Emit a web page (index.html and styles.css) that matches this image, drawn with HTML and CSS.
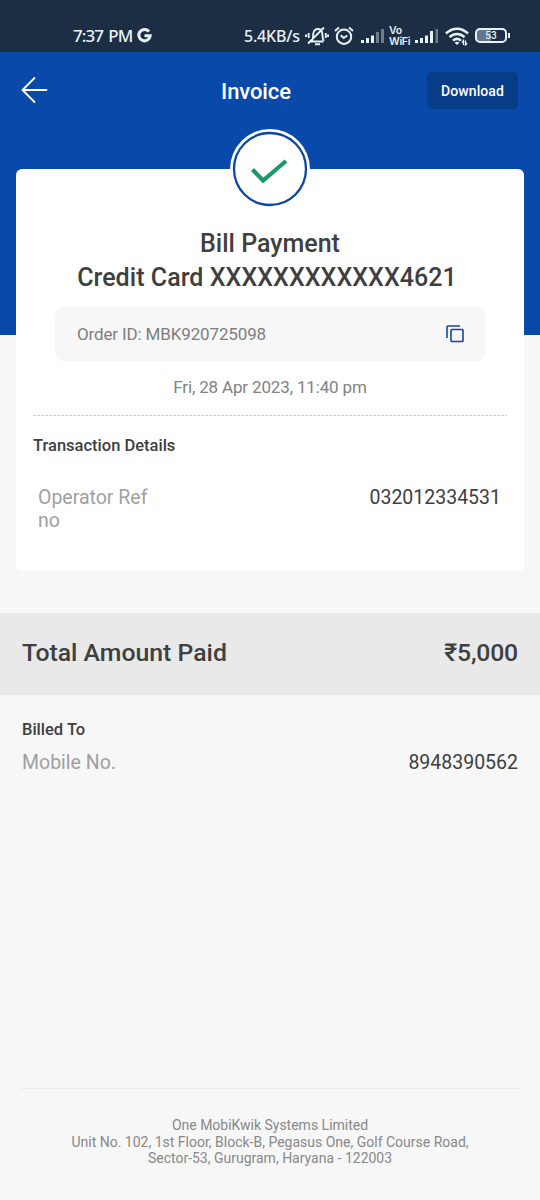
FILE: index.html
```html
<!DOCTYPE html>
<html lang="en">
<head>
<meta charset="utf-8">
<title>Invoice</title>
<link rel="stylesheet" href="styles.css">
</head>
<body>
<div class="status">
  <span class="clock">7:37 PM</span>
  <svg class="google" width="15" height="15" viewBox="0 0 15 15" fill="none" stroke="#e9f1f8" stroke-width="3"><path d="M12 3.600A5.700 5.700 0 1 0 13.200 7.800H7.500"/></svg>
  <span class="speed">5.4KB/s</span>
  <svg class="bell" width="24" height="22" viewBox="0 0 24 22" fill="none" stroke="#e9f1f8" stroke-width="1.9">
    <path d="M5.500 16.500h13M7 16c1.500-2 .8-5 1.300-7.500C9 5 11 4 13 4s4 1.500 4.300 4.500c.3 2.500 0 5 1.500 7.500M10 19.300h5M3 18.500 19 2.500M3.700 8v5M1 9.500v2.500M20.800 8v5M23 9.500v2.500"/>
  </svg>
  <svg class="alarm" width="20" height="20" viewBox="0 0 20 20" fill="none" stroke="#e9f1f8" stroke-width="2">
    <circle cx="10" cy="10.700" r="7.200"/><path d="M1 5 5 1.500M19 5l-4-3.500M6.700 9.200 9.700 12l3.600-2.500"/>
  </svg>
  <svg class="signal-a" width="24" height="16" viewBox="0 0 24 16" fill="#e9f1f8">
    <path d="M0 12h3v3H0zM5 10h3v5H5zM10 7.500h3V15h-3z"/><path opacity=".4" d="M15 4h3v11h-3zM20 1h3v14h-3z"/>
  </svg>
  <span class="vowifi"><span>Vo</span><span>WiFi</span></span>
  <svg class="signal-b" width="24" height="16" viewBox="0 0 24 16" fill="#e9f1f8">
    <path d="M0 12h3v3H0zM5 10h3v5H5zM10 7.500h3V15h-3zM15 3h3v12h-3z"/><path opacity=".4" d="M20.500 1h2.500v14h-2.500z"/>
  </svg>
  <svg class="wifi" width="24" height="19" viewBox="0 0 24 19" fill="none" stroke="#e9f1f8" stroke-width="2.500">
    <path d="M1 6.500C7.500 0 16.500 0 23 6.500M4.500 10.200c4.500-4.200 10.500-4.200 15 0M8 13.600c2.500-2.200 5.500-2.200 8 0"/><path fill="#e9f1f8" stroke="none" d="M9.500 15.500q2.500-1.700 5 0L12 18z"/><path stroke-width="1.300" d="M18.500 18v-4.500l-1.500 2M20.500 13.500v4.500l1.500-2"/>
  </svg>
  <span class="battery"><span class="cell">53</span><span class="cap"></span></span>
</div>
<main class="page">
  <header class="topbar">
    <svg class="back" width="28" height="28" viewBox="0 0 28 28" fill="none" stroke="#fff" stroke-width="1.800" stroke-linecap="round" stroke-linejoin="round"><path d="M14.500 2 2.500 14l12 12M2.500 14h24"/></svg>
    <h1 class="title">Invoice</h1>
    <button class="download">Download</button>
  </header>
  <section class="card">
    <div class="badge">
      <svg width="80" height="80" viewBox="0 0 80 80" fill="none">
        <circle cx="40" cy="40" r="40" fill="#fff"/>
        <circle cx="40" cy="40" r="36" stroke="#0b47a1" stroke-width="2.300"/>
        <path d="M22.500 40.500 33 51.500 56 32" stroke="#1c996c" stroke-width="4.200"/>
      </svg>
    </div>
    <h2 class="heading"><span class="h-one">Bill Payment</span><span class="h-two">Credit Card XXXXXXXXXXXX4621</span></h2>
    <div class="order">
      <span class="order-id">Order ID: MBK920725098</span>
      <svg width="18" height="18" viewBox="0 0 18 18" fill="none" stroke="#0d49a3" stroke-width="1.600"><path d="M1 13V2q0-1 1-1h12"/><rect x="5" y="4.500" width="12" height="12" rx=".8"/></svg>
    </div>
    <p class="date">Fri, 28 Apr 2023, 11:40 pm</p>
    <svg class="rule" width="474" height="2"><path d="M0 .5h474" stroke="#d0d0d0" stroke-width="1" stroke-dasharray="3 1"/></svg>
    <h3 class="sub">Transaction Details</h3>
    <div class="detail">
      <span class="label">Operator Ref<br>no</span>
      <span class="value">032012334531</span>
    </div>
  </section>
  <section class="total"><span class="total-label">Total Amount Paid</span><span class="total-value">₹5,000</span></section>
  <section class="billed">
    <h3 class="sub billed-title">Billed To</h3>
    <div class="billed-row"><span class="label">Mobile No.</span><span class="value">8948390562</span></div>
  </section>
  <footer class="footer">
    <p>One MobiKwik Systems Limited</p>
    <p>Unit No. 102, 1st Floor, Block-B, Pegasus One, Golf Course Road,</p>
    <p>Sector-53, Gurugram, Haryana - 122003</p>
  </footer>
</main>
</body>
</html>
```
FILE: styles.css
```css
* { box-sizing: border-box; margin: 0; padding: 0; }
body { width: 540px; height: 1200px; overflow: hidden; font-family: Roboto, "Noto Sans", sans-serif; color: #3e4040; }
svg { display: block; flex: none; }

.status { height: 52px; padding: 20px 0 0 73px; background: #1b2e43; color: #e9f1f8; display: flex; align-items: center; white-space: nowrap; }
.clock { width: 64px; font: 500 17px/30px "Noto Sans", sans-serif; letter-spacing: -.9px; word-spacing: 1.500px; }
.google { margin: 0 92px 1px 0; }
.speed { width: 61px; font: 500 16px/30px "Noto Sans", sans-serif; letter-spacing: -.2px; }
.alarm { margin-left: 5px; }
.signal-a { margin-left: 7px; }
.vowifi { display: flex; flex-direction: column; width: 26px; margin: -1px 0 0 4px; font: 600 10.500px/11px Inter, sans-serif; letter-spacing: -.3px; }
.wifi { margin-left: 6px; }
.battery { display: flex; align-items: center; gap: 1px; margin: -1px 0 0 6px; }
.cell { width: 32px; height: 15px; border: 2px solid #e9f1f8; border-radius: 5px; background: linear-gradient(90deg, #64788d 50%, #1b2e43 50%); text-align: center; font: 500 10px/11px Roboto, sans-serif; }
.cap { width: 2px; height: 5px; background: #e9f1f8; }

.page { height: 1148px; display: flex; flex-direction: column; background: linear-gradient(#0849a9 283px, #f7f7f7 283px); }
.topbar { height: 117px; padding: 20px 22px 0 20px; display: flex; align-items: flex-start; }
.back { margin-top: 4px; }
.title { margin-left: 173px; color: #fff; font-size: 22px; line-height: 40px; font-weight: 500; letter-spacing: -.1px; }
.download { margin-left: auto; width: 91px; height: 37px; padding-top: 1px; border: 0; border-radius: 5px; background: #073c88; color: #fff; font: 500 14px/36px Roboto, sans-serif; letter-spacing: .1px; }

.card { position: relative; height: 402px; margin: 0 16px; padding: 58px 17px 0; background: #fff; border-radius: 6px; }
.badge { position: absolute; top: -40px; left: 214px; }
.heading { display: flex; flex-direction: column; align-items: center; font-size: 25px; line-height: 33px; font-weight: 500; white-space: nowrap; }
.h-two { margin-right: 6px; line-height: 35px; letter-spacing: .05px; }
.order { margin: 12px 22px 0; height: 54px; padding: 0 21px 0 22px; border-radius: 9px; background: #f7f7f7; display: flex; align-items: center; justify-content: space-between; color: #7e7e7e; font-size: 17px; letter-spacing: -.14px; }
.date { margin-top: 14px; text-align: center; font-size: 17px; line-height: 24px; color: #828282; letter-spacing: -.15px; }
.rule { margin-top: 16px; }
.sub { font-size: 16.500px; line-height: 22px; font-weight: 500; }
.card .sub { margin-top: 18px; }
.detail { margin-top: 29px; padding: 0 6px 0 5px; display: flex; justify-content: space-between; }
.label { color: #a0a0a0; font-size: 19.500px; line-height: 23px; }
.value { font-size: 19.500px; line-height: 23px; }

.total { height: 82px; margin-top: 42px; padding: 0 22px 4px; background: #e9e9e9; display: flex; align-items: center; justify-content: space-between; font-size: 24.800px; font-weight: 500; }
.total-value { letter-spacing: -.2px; }
.billed { padding: 24px 22px 0; }
.billed-row { display: flex; justify-content: space-between; margin-top: 10px; }
.footer { margin: auto 20px 0; height: 112px; padding-top: 28px; border-top: 1px solid #ececec; text-align: center; color: #888; font-size: 14px; line-height: 16.500px; }
```
